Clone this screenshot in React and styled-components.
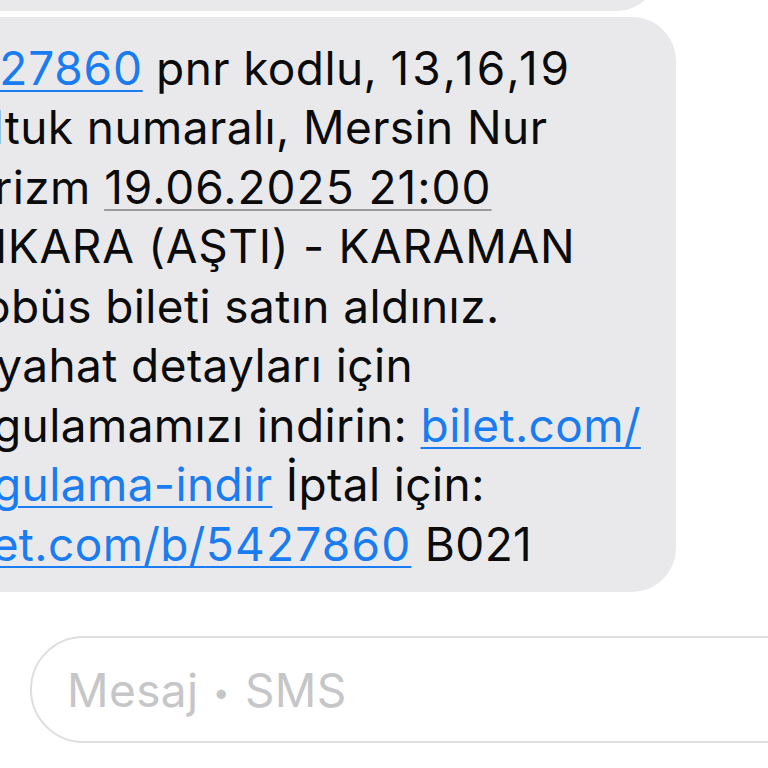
import React from "react";
import styled, { createGlobalStyle } from "styled-components";

const GlobalStyle = createGlobalStyle`
  html, body {
    margin: 0;
    padding: 0;
    background: #fff;
  }
  body {
    font-family: Inter, "Noto Sans", "Liberation Sans", sans-serif;
    -webkit-font-smoothing: antialiased;
  }
`;

const Thread = styled.div`
  width: 768px;
  height: 768px;
  overflow: hidden;
  display: flex;
  flex-direction: column;
  justify-content: flex-end;
  padding-bottom: 25px;
  box-sizing: border-box;
`;

const Bubble = styled.div`
  flex-shrink: 0;
  margin-left: -80px;
  width: ${(p) => p.$width}px;
  background: #e9e9eb;
  border-radius: 44px;
  box-sizing: border-box;
`;

const PrevBubble = styled(Bubble)`
  height: 90px;
  margin-bottom: 6px;
`;

const MessageBubble = styled(Bubble)`
  padding: 22px 0 18px 20px;
  font-size: 46px;
  line-height: 59.5px;
  color: #0b0b0b;
  letter-spacing: 0.4px;
`;

const Line = styled.div`
  white-space: nowrap;
  letter-spacing: ${(p) => (p.$spacing ? `${p.$spacing}px` : "inherit")};
`;

const Link = styled.span`
  color: #1a7cf1;
  text-decoration: underline;
  text-decoration-thickness: 2px;
  text-underline-offset: 5px;
`;

const Detected = styled.span`
  text-decoration: underline;
  text-decoration-color: #9a9a9f;
  text-decoration-thickness: 2px;
  text-underline-offset: 5px;
`;

const Num = styled.span`
  letter-spacing: ${(p) => p.$spacing}px;
`;

const InputBar = styled.div`
  flex-shrink: 0;
  margin-top: 44px;
  margin-left: 30px;
  width: 820px;
  height: 107px;
  border: 2px solid #dedede;
  border-radius: 54px;
  box-sizing: border-box;
  display: flex;
  align-items: center;
  padding-left: 35px;
`;

const Placeholder = styled.span`
  font-size: 46px;
  color: #c6c6c8;
  letter-spacing: 0.4px;
`;

const Dot = styled.span`
  display: inline-block;
  font-size: 30px;
  margin: 0 15px 0 14px;
  vertical-align: 4px;
`;

export default function App() {
  return (
    <>
      <GlobalStyle />
      <Thread>
        <PrevBubble $width={740} />
        <MessageBubble $width={756}>
          <Line>
            <Link>
              <Num $spacing={0.8}>5427860</Num>
            </Link>{" "}
            pnr kodlu, <Num $spacing={3}>13,16,19</Num>
          </Line>
          <Line>koltuk numaralı, Mersin Nur</Line>
          <Line>
            Turizm{" "}
            <Detected>
              <Num $spacing={1}>19.06.2025 21:00</Num>
            </Detected>
          </Line>
          <Line $spacing={0.7}>ANKARA (AŞTI) - KARAMAN</Line>
          <Line>otobüs bileti satın aldınız.</Line>
          <Line>Seyahat detayları için</Line>
          <Line>
            uygulamamızı indirin: <Link>bilet.com/</Link>
          </Line>
          <Line>
            <Link>uygulama-indir</Link> İptal için:
          </Line>
          <Line>
            <Link>
              bilet.com/b/<Num $spacing={1.2}>5427860</Num>
            </Link>{" "}
            B021
          </Line>
        </MessageBubble>
        <InputBar>
          <Placeholder>
            Mesaj<Dot>•</Dot>SMS
          </Placeholder>
        </InputBar>
      </Thread>
    </>
  );
}
